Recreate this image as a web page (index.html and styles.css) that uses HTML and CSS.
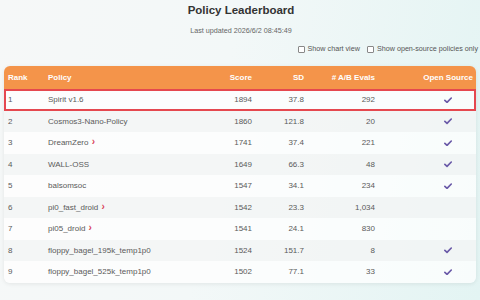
FILE: index.html
```html
<!DOCTYPE html>
<html>
<head>
<meta charset="utf-8">
<link rel="stylesheet" href="styles.css">
</head>
<body>
<div class="page">
  <h1 class="title">Policy Leaderboard</h1>
  <div class="updated">Last updated 2026/6/2 08:45:49</div>
  <div class="controls">
    <label class="opt"><span class="box"></span>Show chart view</label>
    <label class="opt"><span class="box"></span>Show open-source policies only</label>
  </div>
  <div class="card">
    <table class="board">
      <colgroup>
        <col class="c-rank"><col class="c-policy"><col class="c-score"><col class="c-sd"><col class="c-evals"><col class="c-os">
      </colgroup>
      <thead>
        <tr><th class="l">Rank</th><th class="l">Policy</th><th>Score</th><th>SD</th><th># A/B Evals</th><th class="os">Open Source</th></tr>
      </thead>
      <tbody>
        <tr class="hl"><td class="l">1</td><td class="l">Spirit v1.6</td><td>1894</td><td>37.8</td><td>292</td><td class="chk"><svg class="tick" viewBox="0 0 9 7"><path d="M1 3.6 L3.4 5.8 L8.2 1"/></svg></td></tr>
        <tr><td class="l">2</td><td class="l">Cosmos3-Nano-Policy</td><td>1860</td><td>121.8</td><td>20</td><td class="chk"><svg class="tick" viewBox="0 0 9 7"><path d="M1 3.6 L3.4 5.8 L8.2 1"/></svg></td></tr>
        <tr><td class="l">3</td><td class="l">DreamZero <span class="arr">›</span></td><td>1741</td><td>37.4</td><td>221</td><td class="chk"><svg class="tick" viewBox="0 0 9 7"><path d="M1 3.6 L3.4 5.8 L8.2 1"/></svg></td></tr>
        <tr><td class="l">4</td><td class="l">WALL-OSS</td><td>1649</td><td>66.3</td><td>48</td><td class="chk"><svg class="tick" viewBox="0 0 9 7"><path d="M1 3.6 L3.4 5.8 L8.2 1"/></svg></td></tr>
        <tr><td class="l">5</td><td class="l">balsomsoc</td><td>1547</td><td>34.1</td><td>234</td><td class="chk"><svg class="tick" viewBox="0 0 9 7"><path d="M1 3.6 L3.4 5.8 L8.2 1"/></svg></td></tr>
        <tr><td class="l">6</td><td class="l">pi0_fast_droid <span class="arr">›</span></td><td>1542</td><td>23.3</td><td>1,034</td><td class="chk"></td></tr>
        <tr><td class="l">7</td><td class="l">pi05_droid <span class="arr">›</span></td><td>1541</td><td>24.1</td><td>830</td><td class="chk"></td></tr>
        <tr><td class="l">8</td><td class="l">floppy_bagel_195k_temp1p0</td><td>1524</td><td>151.7</td><td>8</td><td class="chk"><svg class="tick" viewBox="0 0 9 7"><path d="M1 3.6 L3.4 5.8 L8.2 1"/></svg></td></tr>
        <tr><td class="l">9</td><td class="l">floppy_bagel_525k_temp1p0</td><td>1502</td><td>77.1</td><td>33</td><td class="chk"><svg class="tick" viewBox="0 0 9 7"><path d="M1 3.6 L3.4 5.8 L8.2 1"/></svg></td></tr>
      </tbody>
    </table>
  </div>
</div>
</body>
</html>
```
FILE: styles.css
```css
html, body {
  margin: 0;
  height: 100%;
}
body {
  background: linear-gradient(100deg, #f6f8f8 0%, #f3f8f8 45%, #e3f4f3 100%);
  font-family: "Liberation Sans", Arial, sans-serif;
  color: #555;
  overflow: hidden;
}
.page {
  padding: 3px 2px 0 4px;
}
.title {
  margin: 0;
  text-align: center;
  font-size: 11.5px;
  line-height: 14px;
  font-weight: bold;
  color: #333;
}
.updated {
  margin-top: 9px;
  text-align: center;
  font-size: 7.2px;
  line-height: 10px;
  color: #666;
}
.controls {
  margin-top: 8px;
  display: flex;
  justify-content: flex-end;
  gap: 7px;
  font-size: 7.2px;
  line-height: 10px;
  color: #555;
}
.opt {
  display: flex;
  align-items: center;
  gap: 3px;
}
.box {
  width: 5px;
  height: 5px;
  border: 1px solid #888;
  border-radius: 1px;
  background: #fff;
}
.card {
  margin-top: 12px;
  width: 472px;
  border-radius: 6px;
  overflow: hidden;
  box-shadow: 0 1px 4px rgba(0, 0, 0, 0.08);
}
.board {
  width: 472px;
  table-layout: fixed;
  border-collapse: separate;
  border-spacing: 0;
  font-size: 8px;
}
.c-rank { width: 40px; }
.c-policy { width: 156px; }
.c-score { width: 56px; }
.c-sd { width: 52px; }
.c-evals { width: 71px; }
.c-os { width: 97px; }
th {
  background: #f4944a;
  color: #fff;
  font-weight: bold;
  height: 23px;
  padding: 0 4px;
  text-align: right;
}
th.os { padding-right: 3px; }
td {
  height: 21.5px;
  padding: 0 4px;
  text-align: right;
  color: #5a5a5a;
  white-space: nowrap;
}
th.l, td.l { text-align: left; }
tbody tr:nth-child(odd) { background: rgba(255, 255, 255, 0.75); }
tbody tr:nth-child(even) { background: rgba(244, 245, 245, 0.8); }
tr.hl { outline: 2px solid #e5484f; outline-offset: -2px; }
td.chk {
  padding-right: 24px;
  line-height: 0;
}
.tick {
  width: 8px;
  height: 6.5px;
  fill: none;
  stroke: #6a5aa8;
  stroke-width: 1.9;
  stroke-linecap: round;
  stroke-linejoin: round;
}
.arr {
  color: #d9445a;
  font-weight: bold;
  font-size: 10px;
  line-height: 8px;
  margin-left: 1px;
}
```
